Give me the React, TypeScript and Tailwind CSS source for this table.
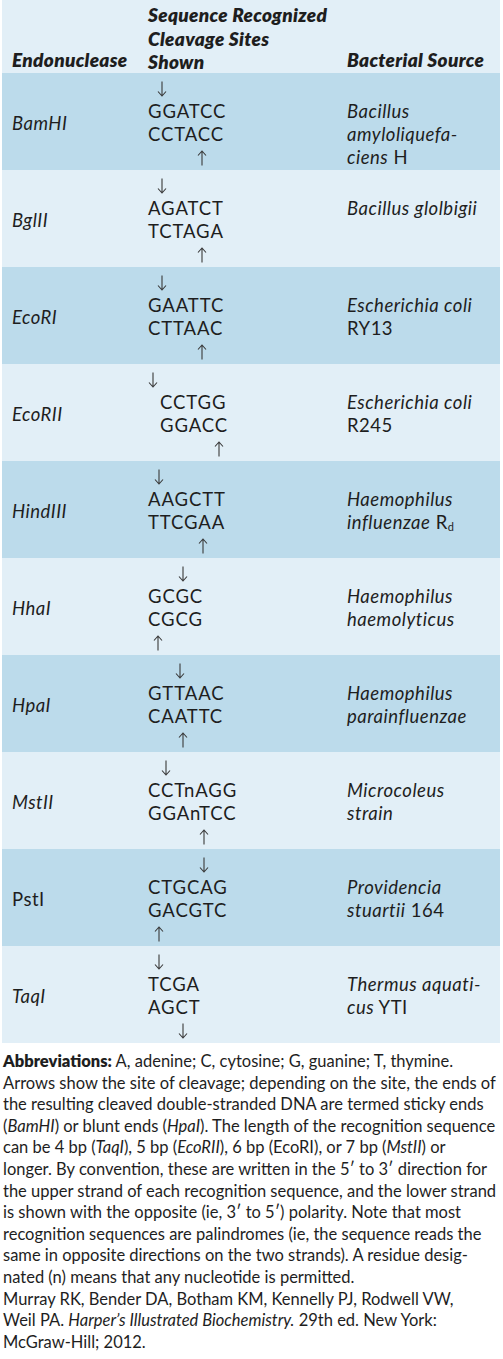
import React from "react";

type Row = {
  name: React.ReactNode;
  top: string;
  bottom: string;
  down: number;
  up: number;
  lastDown?: boolean;
  indent?: number;
  source: React.ReactNode[];
};

const ROWS: Row[] = [
  { name: <i>BamHI</i>, top: "GGATCC", bottom: "CCTACC", down: 9, up: 49, source: [<i>Bacillus</i>, <i>amyloliquefa-</i>, <><i>ciens</i> H</>] },
  { name: <i>BglII</i>, top: "AGATCT", bottom: "TCTAGA", down: 9, up: 49, source: [<i>Bacillus glolbigii</i>] },
  { name: <i>EcoRI</i>, top: "GAATTC", bottom: "CTTAAC", down: 9, up: 49, source: [<i>Escherichia coli</i>, "RY13"] },
  { name: <i>EcoRII</i>, top: "CCTGG", bottom: "GGACC", down: 0, up: 66, indent: 12, source: [<i>Escherichia coli</i>, "R245"] },
  {
    name: <i>HindIII</i>, top: "AAGCTT", bottom: "TTCGAA", down: 6, up: 50,
    source: [<i>Haemophilus</i>, <><i>influenzae</i> R<sub className="text-[11px] relative top-[2px]">d</sub></>],
  },
  { name: <i>HhaI</i>, top: "GCGC", bottom: "CGCG", down: 30, up: 5, source: [<i>Haemophilus</i>, <i>haemolyticus</i>] },
  { name: <i>HpaI</i>, top: "GTTAAC", bottom: "CAATTC", down: 27, up: 30, source: [<i>Haemophilus</i>, <i>parainfluenzae</i>] },
  { name: <i>MstII</i>, top: "CCTnAGG", bottom: "GGAnTCC", down: 13, up: 51, source: [<i>Microcoleus</i>, <i>strain</i>] },
  { name: "PstI", top: "CTGCAG", bottom: "GACGTC", down: 51, up: 6, source: [<i>Providencia</i>, <><i>stuartii</i> 164</>] },
  { name: <i>TaqI</i>, top: "TCGA", bottom: "AGCT", down: 6, up: 30, lastDown: true, source: [<i>Thermus aquati-</i>, <><i>cus</i> YTI</>] },
];

function Arrow({ dir, offset }: { dir: "up" | "down"; offset: number }) {
  return (
    <div className="h-[23px] flex items-center" style={{ paddingLeft: offset }}>
      <svg width="10" height="16" viewBox="0 0 10 16" className={dir === "up" ? "rotate-180" : ""}>
        <path d="M5 0.5 V15 M1 10.5 L5 15 L9 10.5" fill="none" stroke="#3a3a3a" strokeWidth="1.1" />
      </svg>
    </div>
  );
}

function TableRow({ row, dark }: { row: Row; dark: boolean }) {
  return (
    <div className={`grid grid-cols-[146px_199px_1fr] h-[97px] ${dark ? "bg-[#bcdbeb]" : "bg-[#e2eff7]"}`}>
      <div className="pl-[10px] pt-[4px] flex items-center">{row.name}</div>
      <div className="pt-[4px]">
        <Arrow dir="down" offset={row.down} />
        <div className="h-[23px] leading-[23px] tracking-[0.9px]" style={{ paddingLeft: row.indent ?? 0 }}>{row.top}</div>
        <div className="h-[23px] leading-[23px] tracking-[0.9px]" style={{ paddingLeft: row.indent ?? 0 }}>{row.bottom}</div>
        <Arrow dir={row.lastDown ? "down" : "up"} offset={row.up} />
      </div>
      <div className="pt-[27px]">
        {row.source.map((s, i) => (
          <div key={i} className="leading-[23px] whitespace-nowrap">{s}</div>
        ))}
      </div>
    </div>
  );
}

const NOTES: React.ReactNode[] = [
  <><b className="font-extrabold">Abbreviations:</b> A, adenine; C, cytosine; G, guanine; T, thymine.</>,
  "Arrows show the site of cleavage; depending on the site, the ends of",
  "the resulting cleaved double-stranded DNA are termed sticky ends",
  <>(<i>BamHI</i>) or blunt ends (<i>HpaI</i>). The length of the recognition sequence</>,
  <>can be 4 bp (<i>TaqI</i>), 5 bp (<i>EcoRII</i>), 6 bp (EcoRI), or 7 bp (<i>MstII</i>) or</>,
  "longer. By convention, these are written in the 5′ to 3′ direction for",
  "the upper strand of each recognition sequence, and the lower strand",
  "is shown with the opposite (ie, 3′ to 5′) polarity. Note that most",
  "recognition sequences are palindromes (ie, the sequence reads the",
  "same in opposite directions on the two strands). A residue desig-",
  "nated (n) means that any nucleotide is permitted.",
  "Murray RK, Bender DA, Botham KM, Kennelly PJ, Rodwell VW,",
  <>Weil PA. <i>Harper’s Illustrated Biochemistry.</i> 29th ed. New York:</>,
  "McGraw-Hill; 2012.",
];

export default function App() {
  return (
    <div className="w-[503px] h-[1359px] bg-white text-[#1e1e1e] font-['Lato',sans-serif] overflow-hidden">
      <div className="ml-[2px] w-[498px] text-[18.5px] tracking-[0.5px]">
        {/* header */}
        <div className="grid grid-cols-[146px_199px_1fr] h-[73px] bg-[#e2eff7] font-extrabold italic leading-[23.5px] tracking-[0.3px] text-[19px]">
          <div className="pl-[10px] flex items-end pb-[2px]">Endonuclease</div>
          <div className="pt-[3px]">
            <div>Sequence Recognized</div>
            <div>Cleavage Sites</div>
            <div>Shown</div>
          </div>
          <div className="flex items-end pb-[2px]">Bacterial Source</div>
        </div>
        {ROWS.map((r, i) => (
          <TableRow key={i} row={r} dark={i % 2 === 0} />
        ))}
      </div>
      <div className="mt-[8px] pl-[3px] text-[16.5px] leading-[21.6px]">
        {NOTES.map((n, i) => (
          <div key={i} className="whitespace-nowrap">{n}</div>
        ))}
      </div>
    </div>
  );
}
